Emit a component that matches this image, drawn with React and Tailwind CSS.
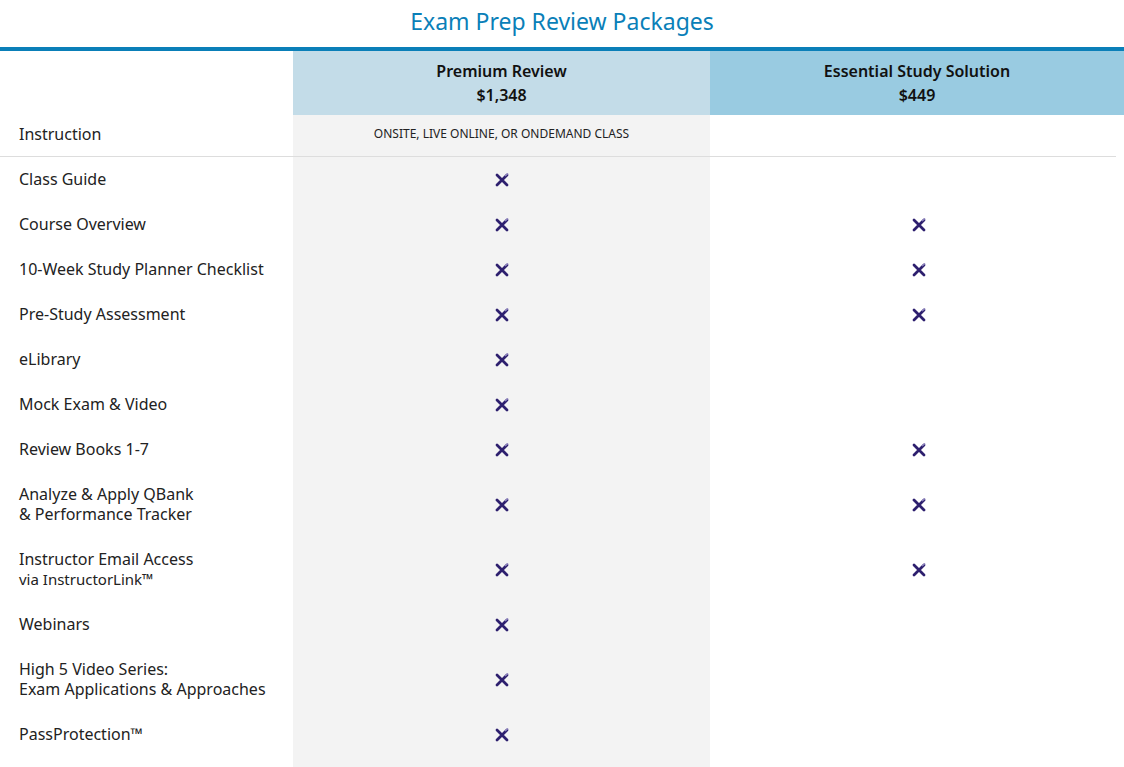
const rows = [
  ["Class Guide", true, false],
  ["Course Overview", true, true],
  ["10-Week Study Planner Checklist", true, true],
  ["Pre-Study Assessment", true, true],
  ["eLibrary", true, false],
  ["Mock Exam & Video", true, false],
  ["Review Books 1-7", true, true],
  [<>Analyze &amp; Apply QBank<br />&amp; Performance Tracker</>, true, true],
  [<>Instructor Email Access<br /><span className="text-[15px]">via InstructorLink™</span></>, true, true],
  ["Webinars", true, false],
  [<>High 5 Video Series:<br />Exam Applications &amp; Approaches</>, true, false],
  ["PassProtection™", true, false],
];

const Mark = () => (
  <svg width="14" height="14" viewBox="0 0 14 14">
    <path d="M2 2 L12 12 M12 2 L2 12" stroke="#2d1f6e" strokeWidth="2.8" strokeLinecap="round" />
    <path d="M10 3 L13 0.5" stroke="#8f86c0" strokeWidth="1.5" />
  </svg>
);

export default function App() {
  return (
    <div className="w-[1124px] h-[767px] overflow-hidden bg-white text-[#222] font-['Open_Sans',sans-serif]">
      <h1 className="h-[47px] pb-1 flex items-center justify-center text-[23px] text-[#0a7fb8]">Exam Prep Review Packages</h1>
      <div className="h-1 bg-[#0a7fb8]" />
      <div className="flex h-[64px] font-semibold text-[16px] leading-[24px] text-[#111]">
        <div className="w-[293px]" />
        <div className="w-[417px] bg-[#c3dce8] flex flex-col items-center justify-center">
          <span>Premium Review</span><span>$1,348</span>
        </div>
        <div className="flex-1 bg-[#99cbe1] flex flex-col items-center justify-center">
          <span>Essential Study Solution</span><span>$449</span>
        </div>
      </div>
      <div className="flex h-[42px] border-b border-[#ddd] mr-2">
        <div className="w-[293px] pl-[19px] pb-1 flex items-center text-[16px]">Instruction</div>
        <div className="w-[417px] bg-[#f3f3f3] pb-1 flex items-center justify-center text-[12px]">ONSITE, LIVE ONLINE, OR ONDEMAND CLASS</div>
        <div className="flex-1" />
      </div>
      {rows.map(([label, a, b], i) => (
        <div key={i} className="flex">
          <div className="w-[293px] pl-[19px] pt-[12px] pb-[13px] text-[16px] leading-[20px]">{label}</div>
          <div className="w-[417px] bg-[#f3f3f3] flex items-center justify-center">{a && <Mark />}</div>
          <div className="flex-1 pl-1 flex items-center justify-center">{b && <Mark />}</div>
        </div>
      ))}
      <div className="flex h-20"><div className="w-[293px]" /><div className="w-[417px] bg-[#f3f3f3]" /></div>
    </div>
  );
}
